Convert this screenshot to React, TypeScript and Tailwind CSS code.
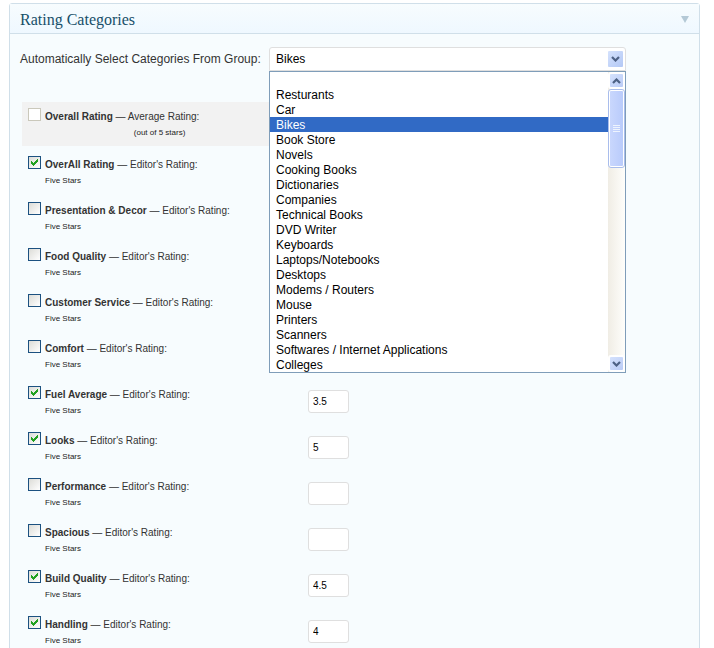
import { useState } from "react";

const groups = [
  "",
  "Resturants",
  "Car",
  "Bikes",
  "Book Store",
  "Novels",
  "Cooking Books",
  "Dictionaries",
  "Companies",
  "Technical Books",
  "DVD Writer",
  "Keyboards",
  "Laptops/Notebooks",
  "Desktops",
  "Modems / Routers",
  "Mouse",
  "Printers",
  "Scanners",
  "Softwares / Internet Applications",
  "Colleges",
];

type Category = { name: string; checked: boolean; rating: string };

const categories: Category[] = [
  { name: "OverAll Rating", checked: true, rating: "" },
  { name: "Presentation & Decor", checked: false, rating: "" },
  { name: "Food Quality", checked: false, rating: "" },
  { name: "Customer Service", checked: false, rating: "" },
  { name: "Comfort", checked: false, rating: "" },
  { name: "Fuel Average", checked: true, rating: "3.5" },
  { name: "Looks", checked: true, rating: "5" },
  { name: "Performance", checked: false, rating: "" },
  { name: "Spacious", checked: false, rating: "" },
  { name: "Build Quality", checked: true, rating: "4.5" },
  { name: "Handling", checked: true, rating: "4" },
];

function Chevron({ up = false }: { up?: boolean }) {
  return (
    <svg viewBox="0 0 9 6" className="h-1.5 w-[9px]" fill="none" stroke="#4d6185" strokeWidth="2.2" aria-hidden="true">
      <path d={up ? "M1 5 4.5 1.5 8 5" : "M1 1 4.5 4.5 8 1"} />
    </svg>
  );
}

function TickBox({ id, checked, disabled }: { id: string; checked: boolean; disabled?: boolean }) {
  return (
    <span className="grid size-[13px] shrink-0">
      <input
        id={id}
        type="checkbox"
        defaultChecked={checked}
        disabled={disabled}
        className="peer col-start-1 row-start-1 size-[13px] appearance-none border border-[#1c5180] bg-linear-to-br from-[#dcdcd7] to-white disabled:border-[#cac8bb] disabled:bg-white disabled:bg-none"
      />
      <svg
        viewBox="0 0 13 13"
        className="pointer-events-none invisible col-start-1 row-start-1 size-[13px] peer-checked:visible"
        fill="#21a121"
        shapeRendering="crispEdges"
        aria-hidden="true"
      >
        <path d="M3 5h1v3H3zM4 6h1v3H4zM5 7h1v3H5zM6 6h1v3H6zM7 5h1v3H7zM8 4h1v3H8zM9 3h1v3H9z" />
      </svg>
    </span>
  );
}

function CategoryRow({ category, index }: { category: Category; index: number }) {
  const id = `category-${index}`;
  return (
    <li className="flex h-[46px] pt-2 pl-1.5">
      <TickBox id={id} checked={category.checked} />
      <label htmlFor={id} className="ml-1 w-[263px] pt-[3px]">
        <span className="block leading-3">
          <b>{category.name}</b> — Editor's Rating:
        </span>
        <span className="mt-1 block text-[8px] leading-3 text-[#222]">Five Stars</span>
      </label>
      <input
        type="text"
        aria-label={`${category.name} rating`}
        defaultValue={category.rating}
        className="mt-1 h-[23px] w-[41px] rounded-[3px] border border-[#dfdfdf] bg-white px-1 text-[10px] text-black"
      />
    </li>
  );
}

export default function App() {
  const [group, setGroup] = useState("Bikes");

  return (
    <div className="h-screen overflow-hidden bg-white pt-[3px] pr-3.5 pl-[9px] font-['Liberation_Sans',Arial,sans-serif] text-[10px] text-[#333]">
      <section className="min-h-full rounded-t-[3px] border border-[#d0dfe9] bg-[#f7fcfe]">
        <header className="flex h-[30px] items-center justify-between border-b border-[#d0dfe9] bg-linear-to-b from-[#f7fcfe] to-[#eff8ff] pt-0.5 pr-2.5 pl-2.5">
          <h2 className="font-['Liberation_Serif',Georgia,serif] text-base leading-5 text-[#174f69]">Rating Categories</h2>
          <button type="button" aria-label="Toggle panel">
            <svg viewBox="0 0 8 7" className="h-[7px] w-2" fill="#b4c9d6" aria-hidden="true">
              <path d="M0 0h8L4 7z" />
            </svg>
          </button>
        </header>

        <div className="flex items-center pt-[13px] pl-2.5 text-xs">
          <label htmlFor="group" className="w-[249px] whitespace-nowrap">
            Automatically Select Categories From Group:
          </label>
          <div className="relative grid w-[357px]">
            <select
              id="group"
              value={group}
              onChange={(e) => setGroup(e.target.value)}
              className="col-start-1 row-start-1 h-6 w-full appearance-none rounded-t-[3px] border border-[#dfdfdf] bg-white px-1.5 leading-4 text-black"
            >
              {groups.map((g) => (
                <option key={g}>{g}</option>
              ))}
            </select>
            <span className="pointer-events-none col-start-1 row-start-1 mr-[3px] flex h-4 w-[15px] items-center justify-center self-center justify-self-end rounded-[1px] bg-linear-to-br from-[#d5e2fd] to-[#b3c8f5]">
              <Chevron />
            </span>

            <div className="absolute top-full left-0 z-10 flex w-full border border-[#7f9db9] bg-white text-black">
              <div role="listbox" aria-label="Groups" className="flex-1">
                {groups.map((g) => (
                  <button
                    key={g}
                    type="button"
                    role="option"
                    aria-selected={g === group}
                    aria-label={g || "None"}
                    onClick={() => setGroup(g)}
                    className="block h-[15px] w-full px-1.5 pt-px text-left leading-[14px] aria-selected:bg-[#316ac5] aria-selected:text-white"
                  >
                    {g}
                  </button>
                ))}
              </div>
              <div className="flex w-[17px] flex-col bg-linear-to-r from-[#f0ede5] to-[#fefefb]">
                <button
                  type="button"
                  aria-label="Scroll up"
                  className="flex h-[17px] items-center justify-center rounded-[3px] border-2 border-white bg-linear-to-br from-[#d5e2fd] to-[#b9cbf6]"
                >
                  <Chevron up />
                </button>
                <div className="h-[79px] rounded-[3px] border border-[#a9bdec] bg-white p-px">
                  <div className="flex h-full flex-col items-center justify-center gap-px rounded-[1px] bg-linear-to-r from-[#c9d7fd] to-[#b9cbfb]">
                    <i className="h-px w-[7px] bg-[#eef4fe]" />
                    <i className="h-px w-[7px] bg-[#eef4fe]" />
                    <i className="h-px w-[7px] bg-[#eef4fe]" />
                    <i className="h-px w-[7px] bg-[#eef4fe]" />
                  </div>
                </div>
                <button
                  type="button"
                  aria-label="Scroll down"
                  className="mt-auto flex h-[17px] items-center justify-center rounded-[3px] border-2 border-white bg-linear-to-br from-[#d5e2fd] to-[#b9cbf6]"
                >
                  <Chevron />
                </button>
              </div>
            </div>
          </div>
        </div>

        <ul className="mt-[31px] mr-20 ml-3">
          <li className="mb-0.5 flex h-11 bg-[#f2f2f2] pt-1.5 pl-1.5">
            <TickBox id="overall" checked={false} disabled />
            <label htmlFor="overall" className="ml-1 pt-[3px]">
              <span className="block leading-3">
                <b>Overall Rating</b> — Average Rating:
              </span>
              <span className="mt-1 block pr-3.5 text-right text-[8px] leading-3 text-[#222]">(out of 5 stars)</span>
            </label>
          </li>
          {categories.map((c, i) => (
            <CategoryRow key={c.name} category={c} index={i} />
          ))}
        </ul>
      </section>
    </div>
  );
}
